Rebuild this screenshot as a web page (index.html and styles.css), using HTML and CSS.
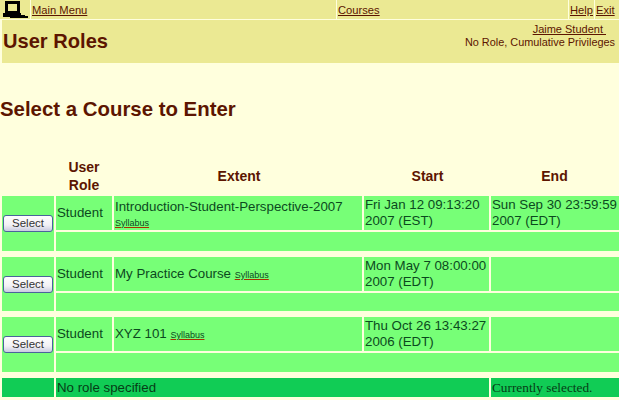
FILE: index.html
```html
<!DOCTYPE html>
<html lang="en">
<head>
<meta charset="utf-8">
<title>User Roles</title>
<link rel="stylesheet" href="styles.css">
</head>
<body>
<nav class="topbar">
  <div class="nav-cell nav-icon">
    <svg width="27" height="18" viewBox="0 0 27 18" aria-hidden="true">
      <path fill="#000" d="M3 0h15v13H3z"/>
      <path fill="#ebe993" d="M6 3h9v7H6z"/>
      <path fill="#000" d="M1 12h2v1h15v-1h1v2h4v1h3v2H8v-1H1z"/>
    </svg>
  </div>
  <div class="nav-cell"><a href="#">Main Menu</a></div>
  <div class="nav-cell"><a href="#">Courses</a></div>
  <div class="nav-cell"><a href="#">Help</a></div>
  <div class="nav-cell"><a href="#">Exit</a></div>
</nav>
<header class="banner">
  <h1 class="banner-title">User Roles</h1>
  <div class="banner-user">
    <a class="user-name" href="#">Jaime Student&nbsp;</a><br>
    No Role, Cumulative Privileges
  </div>
</header>
<h2 class="section-title">Select a Course to Enter</h2>
<table class="courses">
  <colgroup>
    <col class="c-select"><col class="c-role"><col class="c-extent"><col class="c-start"><col class="c-end">
  </colgroup>
  <thead>
    <tr><th></th><th>User Role</th><th class="th-shift">Extent</th><th class="th-shift">Start</th><th class="th-end">End</th></tr>
  </thead>
  <tbody>
    <tr>
      <td rowspan="2" class="select-cell"><button class="select-btn" type="button">Select</button></td>
      <td>Student</td>
      <td class="extent-stacked">Introduction-Student-Perspective-2007<br><a class="syllabus" href="#">Syllabus</a></td>
      <td>Fri Jan 12 09:13:20 2007 (EST)</td>
      <td>Sun Sep 30 23:59:59 2007 (EDT)</td>
    </tr>
    <tr class="sub"><td colspan="4"></td></tr>
    <tr class="spacer"><td colspan="5"></td></tr>
    <tr>
      <td rowspan="2" class="select-cell"><button class="select-btn" type="button">Select</button></td>
      <td>Student</td>
      <td>My Practice Course <a class="syllabus" href="#">Syllabus</a></td>
      <td>Mon May 7 08:00:00 2007 (EDT)</td>
      <td></td>
    </tr>
    <tr class="sub sub-short"><td colspan="4"></td></tr>
    <tr class="spacer"><td colspan="5"></td></tr>
    <tr>
      <td rowspan="2" class="select-cell"><button class="select-btn" type="button">Select</button></td>
      <td>Student</td>
      <td>XYZ 101 <a class="syllabus" href="#">Syllabus</a></td>
      <td>Thu Oct 26 13:43:27 2006 (EDT)</td>
      <td></td>
    </tr>
    <tr class="sub"><td colspan="4"></td></tr>
    <tr class="spacer"><td colspan="5"></td></tr>
    <tr class="current">
      <td></td>
      <td colspan="3">No role specified</td>
      <td class="current-note">Currently selected.</td>
    </tr>
  </tbody>
</table>
</body>
</html>
```
FILE: styles.css
```css
html, body { margin: 0; padding: 0; }
body {
  width: 619px;
  height: 400px;
  overflow: hidden;
  background: #ffffdd;
  color: #5c1500;
  font-family: "Liberation Sans", Arial, sans-serif;
  font-size: 13.3px;
}
.topbar {
  display: grid;
  grid-template-columns: 30px 305px 231px 25px 24px;
  column-gap: 1px;
  height: 19px;
  font-size: 11.2px;
}
.nav-cell {
  background: #ebe993;
  display: flex;
  align-items: center;
  padding-left: 1px;
  overflow: hidden;
}
.nav-icon { padding-left: 2px; }
.nav-icon svg { display: block; }
.topbar a, .banner-user a { color: #5c1500; }
.banner {
  margin: 1px 0 0 2px;
  height: 43px;
  background: #ebe993;
  display: flex;
  justify-content: space-between;
}
.banner-title {
  margin: 10px 0 0 1px;
  font-size: 20.1px;
  line-height: 23px;
  font-weight: bold;
}
.banner-user {
  margin: 3px 4px 0 0;
  text-align: right;
  font-size: 10.9px;
  line-height: 13px;
}
.user-name {
  font-size: 11px;
  margin-right: 9px;
}
.section-title {
  margin: 35px 0 0 0;
  font-size: 20.4px;
  line-height: 23px;
  font-weight: bold;
}
.courses {
  table-layout: fixed;
  width: 622px;
  margin-top: 35px;
  border-collapse: separate;
  border-spacing: 2px;
}
.c-select { width: 52px; }
.c-role { width: 56px; }
.c-extent { width: 248px; }
.c-start { width: 125px; }
.c-end { width: 131px; }
.courses th {
  padding: 0 1px;
  font-size: 14px;
  line-height: 18px;
  height: 36px;
  color: #5c1500;
  text-align: center;
}
.courses .th-shift { padding: 0 0 0 2px; }
.courses .th-end { padding: 0 5px 0 1px; }
.courses td {
  background: #77ff77;
  color: #0b4a1e;
  padding: 1px;
  vertical-align: middle;
  line-height: 16px;
  height: 32px;
}
.courses .extent-stacked { line-height: 15px; padding-top: 2px; height: 31px; }
.courses .sub td { height: 17px; }
.courses .sub-short td { height: 16px; }
.courses .spacer td { background: transparent; height: 2px; padding: 0; line-height: 0; font-size: 0; }
.courses .select-cell { padding: 0 1px; text-align: center; }
.courses .current td { background: #11cc55; height: 17px; color: #063c16; }
.courses .current .current-note { font-family: "Liberation Serif", serif; font-size: 13.3px; }
.syllabus {
  font-size: 9px;
  line-height: 1;
  color: #0b4a1e;
  text-decoration-color: #a83000;
}
.select-btn {
  display: block;
  width: 50px;
  height: 17px;
  padding: 0;
  margin: 0;
  font-family: "Liberation Sans", Arial, sans-serif;
  font-size: 11.5px;
  line-height: 15px;
  color: #333;
  border: 1px solid #4a639c;
  border-radius: 3px;
  background: linear-gradient(#fff, #f2f1f5 60%, #c9cbe0);
}
```
